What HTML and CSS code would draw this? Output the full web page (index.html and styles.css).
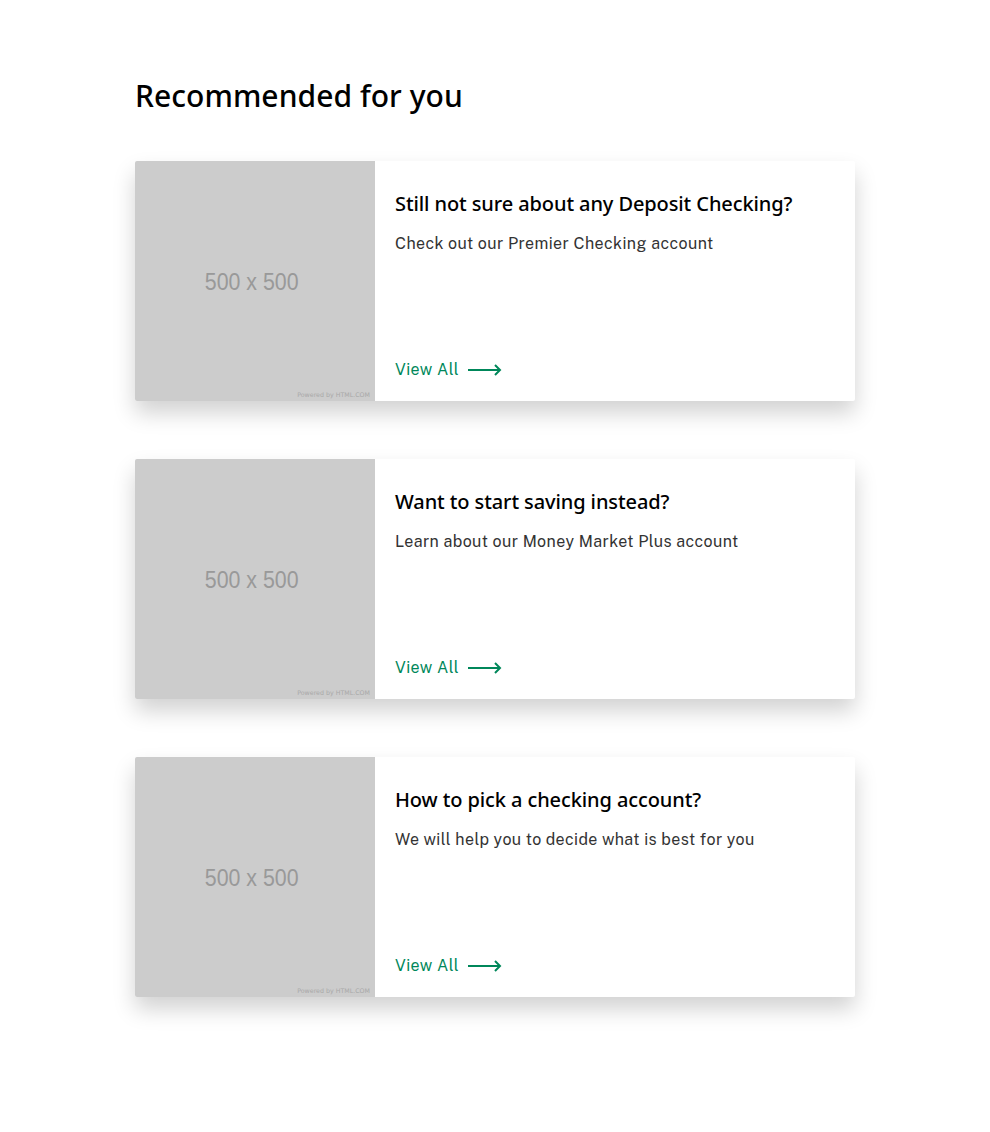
FILE: index.html
```html
<!DOCTYPE html>
<html>
<head>
<meta charset="utf-8">
<link rel="stylesheet" href="styles.css">
</head>
<body>
<main class="page">
  <h1 class="heading">Recommended for you</h1>
  <div class="list">
    <article class="card">
      <div class="thumb"><span class="thumb-size">500 x 500</span><span class="thumb-credit">Powered by HTML.COM</span></div>
      <div class="body">
        <h2 class="title">Still not sure about any Deposit Checking?</h2>
        <p class="desc">Check out our Premier Checking account</p>
        <a class="link" href="#">View All <svg class="arrow" width="34" height="12" viewBox="0 0 34 12"><path d="M0 6H32M27 1L32 6L27 11" fill="none" stroke="currentColor" stroke-width="2"/></svg></a>
      </div>
    </article>
    <article class="card">
      <div class="thumb"><span class="thumb-size">500 x 500</span><span class="thumb-credit">Powered by HTML.COM</span></div>
      <div class="body">
        <h2 class="title">Want to start saving instead?</h2>
        <p class="desc">Learn about our Money Market Plus account</p>
        <a class="link" href="#">View All <svg class="arrow" width="34" height="12" viewBox="0 0 34 12"><path d="M0 6H32M27 1L32 6L27 11" fill="none" stroke="currentColor" stroke-width="2"/></svg></a>
      </div>
    </article>
    <article class="card">
      <div class="thumb"><span class="thumb-size">500 x 500</span><span class="thumb-credit">Powered by HTML.COM</span></div>
      <div class="body">
        <h2 class="title">How to pick a checking account?</h2>
        <p class="desc">We will help you to decide what is best for you</p>
        <a class="link" href="#">View All <svg class="arrow" width="34" height="12" viewBox="0 0 34 12"><path d="M0 6H32M27 1L32 6L27 11" fill="none" stroke="currentColor" stroke-width="2"/></svg></a>
      </div>
    </article>
  </div>
</main>
</body>
</html>
```
FILE: styles.css
```css
* { box-sizing: border-box; }
body { margin: 0; background: #fff; font-family: "Public Sans", "Inter", "Noto Sans", sans-serif; }
.page { width: 720px; margin: 0 auto; padding: 76px 0 120px; }
.heading { margin: 0 0 45px; font-family: "Noto Sans", sans-serif; font-weight: 500; font-size: 30px; line-height: 40px; color: #000; letter-spacing: 0.05px; }
.list { display: flex; flex-direction: column; gap: 58px; }
.card { display: flex; height: 240px; background: #fff; border-radius: 2px; box-shadow: 0 12px 22px rgba(0,0,0,0.18); overflow: hidden; }
.thumb { position: relative; width: 240px; flex: none; background: #cccccc; display: flex; align-items: center; justify-content: center; }
.thumb-size { font-family: "Liberation Sans", Arial, sans-serif; font-size: 24px; color: #999; margin-top: 2px; margin-right: 6px; transform: scaleX(0.89); }
.thumb-credit { position: absolute; right: 5px; bottom: 3px; font-family: "DejaVu Sans", sans-serif; font-size: 6.3px; color: #a8a8a8; }
.body { flex: 1; padding: 30px 20px 20px; display: flex; flex-direction: column; }
.title { margin: 0; font-family: "Noto Sans", sans-serif; font-weight: 500; font-size: 20px; line-height: 26px; color: #000; letter-spacing: -0.1px; }
.desc { margin: 16px 0 0; font-size: 16px; line-height: 22px; color: #333; letter-spacing: 0.4px; }
.link { margin-top: auto; display: flex; align-items: center; gap: 9px; font-size: 16px; line-height: 22px; color: #00875a; text-decoration: none; letter-spacing: 0.4px; }
.arrow { display: block; }
```
